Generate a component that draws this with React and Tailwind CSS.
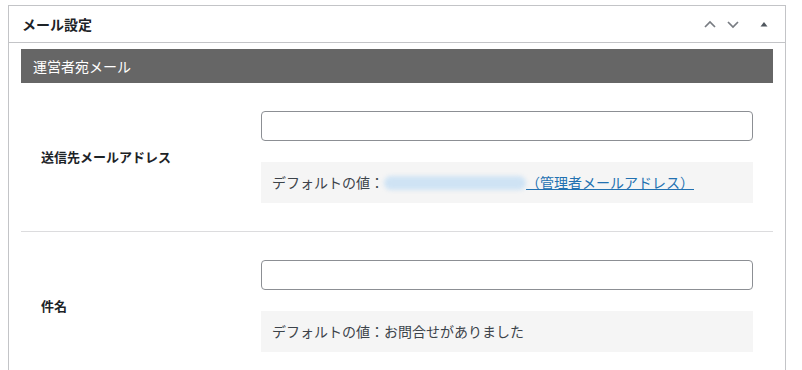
import { useState } from 'react'

const font = { fontFamily: '"Noto Sans CJK JP", "Noto Sans", sans-serif' }

const Field = ({ label, children }) => (
    <div className="flex items-center py-[28px]">
        <div className="w-[240px] pl-[20px] text-[13px] font-bold text-[#1d2327]">{label}</div>
        <div className="w-[492px] flex flex-col gap-[21px]">{children}</div>
    </div>
)

const App = () => {
    const [to, setTo] = useState('')
    const [subject, setSubject] = useState('')

    return (
        <div className="w-[802px] h-[370px] bg-white overflow-hidden pt-[5px] pl-[8px]" style={font}>
            <div className="w-[778px] border border-[#c3c4c7] border-b-0 bg-white">
                <div className="h-[37px] flex items-center justify-between border-b border-[#c3c4c7] pl-[13px] pr-[14px]">
                    <h2 className="text-[14px] font-bold text-[#1d2327]">メール設定</h2>
                    <div className="flex items-center gap-[9px]">
                        <svg width="14" height="14" viewBox="0 0 14 14" fill="none" stroke="#787c82" strokeWidth="1.7">
                            <path d="M2 10 L7 5 L12 10" />
                        </svg>
                        <svg width="14" height="14" viewBox="0 0 14 14" fill="none" stroke="#787c82" strokeWidth="1.7">
                            <path d="M2 5 L7 10 L12 5" />
                        </svg>
                        <svg width="14" height="14" viewBox="0 0 14 14" className="ml-[8px]">
                            <path d="M3.5 9.5 L7 5 L10.5 9.5 Z" fill="#50575e" />
                        </svg>
                    </div>
                </div>
                <div className="pt-[6px] px-[12px]">
                    <div className="h-[34px] bg-[#666666] flex items-center pl-[12px] text-[14px] text-white">
                        運営者宛メール
                    </div>
                    <Field label="送信先メールアドレス">
                        <input
                            value={to}
                            onChange={(e) => setTo(e.target.value)}
                            className="h-[30px] w-full rounded-[4px] border border-[#8c8f94] bg-white px-2 text-[14px] outline-none"
                        />
                        <div className="h-[41px] bg-[#f5f5f5] flex items-center pl-[11px] text-[14px] text-[#3c434a]">
                            デフォルトの値：
                            <span className="inline-block w-[142px] h-[14px] rounded-full bg-[#cfe3f4] blur-[2px]"></span>
                            <a href="#" className="text-[#2271b1] underline">（管理者メールアドレス）</a>
                        </div>
                    </Field>
                    <div className="border-t border-[#dcdcde]"></div>
                    <Field label="件名">
                        <input
                            value={subject}
                            onChange={(e) => setSubject(e.target.value)}
                            className="h-[30px] w-full rounded-[4px] border border-[#8c8f94] bg-white px-2 text-[14px] outline-none"
                        />
                        <div className="h-[41px] bg-[#f5f5f5] flex items-center pl-[11px] text-[14px] text-[#3c434a]">
                            デフォルトの値：お問合せがありました
                        </div>
                    </Field>
                </div>
            </div>
        </div>
    )
}

export default App
